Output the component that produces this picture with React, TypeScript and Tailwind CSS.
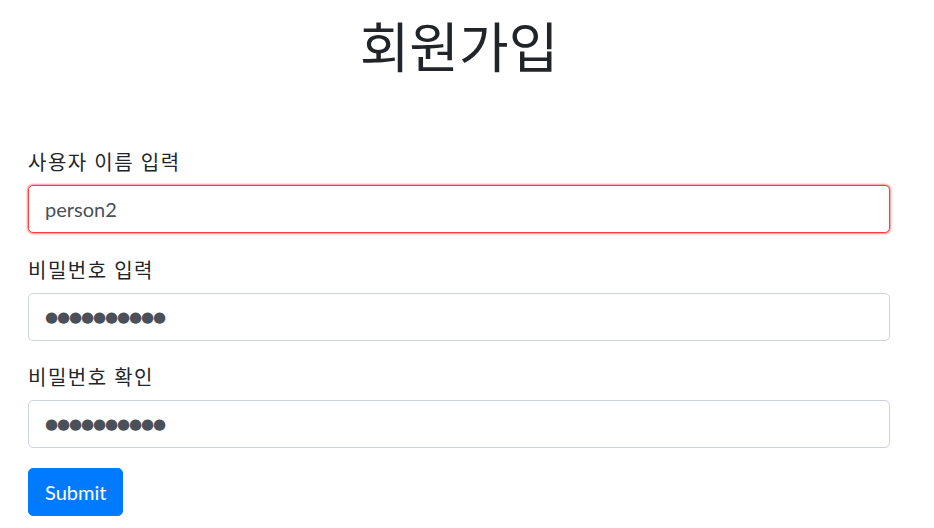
import { useState } from 'react';

const fontStack = { fontFamily: 'Lato, "Noto Sans CJK KR", sans-serif' };

function Field({
  label,
  value,
  mask,
  invalid,
  gap,
}: {
  label: string;
  value: string;
  mask?: boolean;
  invalid?: boolean;
  gap: string;
}) {
  const [v, setV] = useState(value);
  return (
    <div className={gap}>
      <label className="block mb-2 text-[20px] leading-[30px] tracking-[1.5px] text-[#212529]">{label}</label>
      <input
        type="text"
        value={mask ? '●'.repeat(v.length) : v}
        onChange={(e) => setV(e.target.value)}
        style={mask ? { fontFamily: '"DejaVu Sans", sans-serif' } : undefined}
        className={`block w-full h-[48px] px-4 bg-white rounded-[5px] border outline-none ${
          mask ? 'text-[15px] tracking-[-1.1px] text-[#495057]' : 'text-[20px] text-[#495057]'
        } ${
          invalid
            ? 'border-[#ff3b3b] shadow-[0_0_2px_1px_rgba(255,0,0,0.45)]'
            : 'border-[#ced4da]'
        }`}
      />
    </div>
  );
}

export default function App() {
  return (
    <div className="bg-white min-h-[528px]" style={fontStack}>
      <div className="w-[918px] px-[28px]">
        {/* Title */}
        <h1
          className="text-center text-[54px] leading-[62px] font-normal text-[#212529] mt-[14px] mb-[71px]"
          style={{ fontFamily: '"Noto Sans CJK KR", sans-serif' }}
        >
          회원가입
        </h1>

        {/* Form */}
        <form onSubmit={(e) => e.preventDefault()}>
          <Field label="사용자 이름 입력" value="person2" invalid gap="mb-[22px]" />
          <Field label="비밀번호 입력" value="1234567890" mask gap="mb-[21px]" />
          <Field label="비밀번호 확인" value="1234567890" mask gap="mb-[20px]" />
          <button
            type="submit"
            className="h-[48px] px-4 text-[20px] text-white bg-[#007bff] rounded-[5px] border border-[#007bff]"
          >
            Submit
          </button>
        </form>
      </div>
    </div>
  );
}
